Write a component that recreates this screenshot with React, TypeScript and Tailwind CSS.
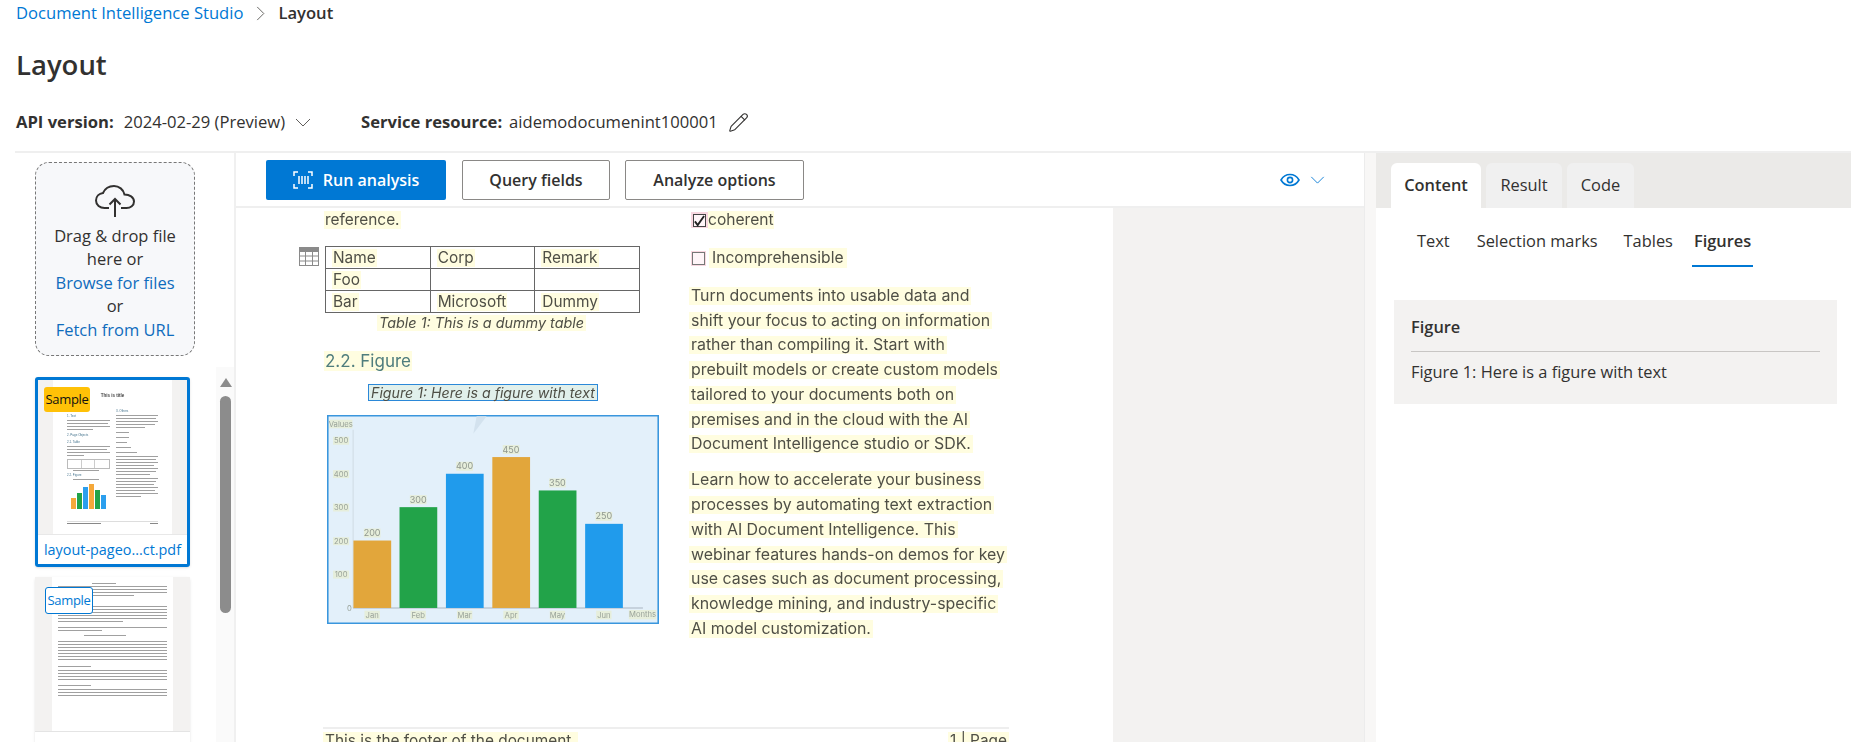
import React from "react";
import { Pencil } from "lucide-react";

const paragraphOne = [
  "Turn documents into usable data and",
  "shift your focus to acting on information",
  "rather than compiling it. Start with",
  "prebuilt models or create custom models",
  "tailored to your documents both on",
  "premises and in the cloud with the AI",
  "Document Intelligence studio or SDK.",
];

const paragraphTwo = [
  "Learn how to accelerate your business",
  "processes by automating text extraction",
  "with AI Document Intelligence. This",
  "webinar features hands-on demos for key",
  "use cases such as document processing,",
  "knowledge mining, and industry-specific",
  "AI model customization.",
];

const chartBars = [
  { label: "Jan", value: "200", x: 131, top: 420, fill: "#e2a63b" },
  { label: "Feb", value: "300", x: 269, top: 320, fill: "#22a349" },
  { label: "Mar", value: "400", x: 408, top: 220, fill: "#209bec" },
  { label: "Apr", value: "450", x: 547, top: 170, fill: "#e2a63b" },
  { label: "May", value: "350", x: 686, top: 270, fill: "#22a349" },
  { label: "Jun", value: "250", x: 825, top: 370, fill: "#209bec" },
];

const Chevron: React.FC<{ className?: string }> = ({ className }) => (
  <svg viewBox="0 0 16 9" fill="none" stroke="currentColor" strokeWidth="1" className={className}>
    <path d="M1 1l7 7 7-7" />
  </svg>
);

const Hl: React.FC<{ children: React.ReactNode; className?: string }> = ({ children, className }) => (
  <span className={`block w-fit bg-[#fffde0] whitespace-nowrap ${className ?? "px-[2px]"}`}>{children}</span>
);

const Bars: React.FC<{ widths: number[]; className?: string }> = ({ widths, className }) => (
  <div className={`flex flex-col gap-[2px] ${className ?? ""}`}>
    {widths.map((w, i) => (
      <div key={i} className="h-px bg-[#a0a0a0]" style={{ width: `${w}%` }} />
    ))}
  </div>
);

const MiniChart = () => (
  <svg viewBox="0 0 42 30" className="h-[30px] w-[42px]">
    <rect x="4" y="18" width="5" height="11" fill="#f5a83a" />
    <rect x="10" y="13" width="5" height="16" fill="#22a349" />
    <rect x="16" y="7" width="5" height="22" fill="#2b9fee" />
    <rect x="22" y="4" width="5" height="25" fill="#f5a83a" />
    <rect x="28" y="10" width="5" height="19" fill="#22a349" />
    <rect x="34" y="15" width="5" height="14" fill="#2b9fee" />
  </svg>
);

const ThumbOne = () => (
  <div className="relative h-[155px] border-b border-[#e8e8e8] bg-[#f3f2f1]">
    <div className="mx-[15px] h-full w-[119px] bg-white px-[14px] pt-[13px] font-['Liberation_Sans',sans-serif] blur-[0.3px]">
      <div className="text-center text-[4.5px] font-bold text-[#444]">This is title</div>
      <div className="mt-[9px] flex gap-[6px]">
        <div className="w-[43px]">
          <div className="mt-[5px] text-[3px] text-[#41718c]">1. Text</div>
          <Bars widths={[100, 96, 100, 60]} className="mt-[2px]" />
          <div className="mt-[3px] text-[3px] text-[#41718c]">2. Page Objects</div>
          <div className="mt-[2px] text-[3px] text-[#41718c]">2.1. Table</div>
          <Bars widths={[100, 92, 100, 40]} className="mt-[2px]" />
          <div className="mt-[3px] grid h-[10px] grid-cols-3 border border-[#bbb]">
            <div className="border-r border-[#ccc]" />
            <div className="border-r border-[#ccc]" />
            <div />
          </div>
          <Bars widths={[70]} className="mt-[1px] ml-[6px]" />
          <div className="mt-[2px] text-[3px] text-[#41718c]">2.2. Figure</div>
          <Bars widths={[70]} className="mt-[1px] ml-[6px]" />
          <MiniChart />
        </div>
        <div className="w-[42px]">
          <div className="text-[3px] text-[#41718c]">3. Others</div>
          <Bars widths={[100, 96, 100, 92, 70]} className="mt-[2px]" />
          <Bars widths={[30]} className="mt-[4px]" />
          <Bars widths={[30]} className="mt-[4px]" />
          <Bars widths={[25]} className="mt-[4px]" />
          <Bars widths={[35]} className="mt-[4px]" />
          <Bars widths={[50]} className="mt-[4px]" />
          <Bars widths={[100, 95, 100, 90, 100, 96, 80]} className="mt-[3px]" />
          <Bars widths={[100, 96, 90, 100, 94, 100, 60]} className="mt-[3px]" />
        </div>
      </div>
      <div className="mt-[11px] flex justify-between border-t border-[#ddd] pt-px">
        <div className="h-px w-[34px] bg-[#888]" />
        <div className="h-px w-[8px] bg-[#888]" />
      </div>
    </div>
    <div className="absolute top-[7px] left-[6px] flex h-[25px] w-[46px] items-center justify-center rounded-[3px] bg-[#ffc107] text-[13px] tracking-[-0.3px] text-[#111]">
      Sample
    </div>
  </div>
);

const ThumbTwo = () => (
  <div className="relative h-[155px] border-b border-[#e4e4e4] bg-[#f3f2f1]">
    <div className="mx-[17px] h-full w-[121px] bg-white px-[6px] pt-[6px] blur-[0.3px]">
      <Bars widths={[40]} className="ml-[34px] w-[60px]" />
      <Bars widths={[100, 100, 100, 70]} className="mt-[2px]" />
      <Bars widths={[30]} className="mt-[3px] ml-[12px] w-[60px]" />
      <Bars widths={[100, 100, 100, 100, 100, 60]} className="mt-[6px]" />
      <Bars widths={[100, 40]} className="mt-[5px]" />
      <Bars widths={[50]} className="mt-[4px] ml-[26px]" />
      <Bars widths={[100, 100, 100, 100, 100, 100, 100]} className="mt-[5px]" />
      <Bars widths={[30]} className="mt-[6px]" />
      <Bars widths={[100, 100, 100, 100]} className="mt-[3px]" />
      <Bars widths={[30]} className="mt-[5px]" />
      <Bars widths={[100, 100, 100]} className="mt-[3px]" />
    </div>
    <div className="absolute top-[10px] left-[10px] flex h-[27px] w-[48px] items-center justify-center rounded-[3px] border border-[#0078d4] bg-white text-[13px] tracking-[-0.3px] text-[#0078d4]">
      Sample
    </div>
  </div>
);

const ChartFigure = () => (
  <svg viewBox="52 44 994 626" className="mt-[14px] block h-[209px] w-[332px]">
    <rect x="54" y="46" width="990" height="622" fill="#e3f0fa" stroke="#3a96dd" strokeWidth="5" />
    <path d="M490 100l40-52h-30z" fill="#d3e2ee" />
    <path d="M130 88v534" stroke="#cfdbe4" strokeWidth="3" />
    <path d="M130 622h868" stroke="#bcc8d3" strokeWidth="5" />
    {[
      { t: "500", y: 121 },
      { t: "400", y: 221 },
      { t: "300", y: 321 },
      { t: "200", y: 422 },
      { t: "100", y: 522 },
    ].map((tick) => (
      <g key={tick.t}>
        <rect x="70" y={tick.y - 12} width="48" height="24" fill="#e6eedb" />
        <text x="94" y={tick.y + 8} textAnchor="middle" fontSize="23" fill="#9aa39a">
          {tick.t}
        </text>
      </g>
    ))}
    <text x="119" y="630" textAnchor="middle" fontSize="23" fill="#9aa39a">0</text>
    <rect x="58" y="58" width="70" height="26" fill="#e6eedb" />
    <text x="93" y="79" textAnchor="middle" fontSize="23" fill="#9aa39a">Values</text>
    {chartBars.map((bar) => (
      <g key={bar.label}>
        <rect x={bar.x} y={bar.top} width="113" height={622 - bar.top} fill={bar.fill} />
        <rect x={bar.x + 31} y={bar.top - 36} width="50" height="27" fill="#e6eedb" />
        <text x={bar.x + 56} y={bar.top - 13} textAnchor="middle" fontSize="27" fill="#8f978f">
          {bar.value}
        </text>
        <rect x={bar.x + 33} y="630" width="46" height="26" fill="#e6eedb" />
        <text x={bar.x + 56} y="651" textAnchor="middle" fontSize="23" fill="#9aa39a">
          {bar.label}
        </text>
      </g>
    ))}
    <rect x="956" y="628" width="82" height="28" fill="#e6eedb" />
    <text x="997" y="650" textAnchor="middle" fontSize="23" fill="#9aa39a">Months</text>
  </svg>
);

const TableIcon = () => (
  <svg viewBox="0 0 20 19" className="absolute top-px left-[-26px] h-[19px] w-[20px]" fill="none" stroke="#8a8a8a">
    <rect x="0.5" y="0.5" width="19" height="18" />
    <path d="M0 4.5h20M0 9h20M0 14h20M6.5 4v15M13.5 4v15" />
    <rect x="0.5" y="0.5" width="19" height="3" fill="#8a8a8a" />
  </svg>
);

const EyeIcon = () => (
  <svg viewBox="0 0 20 14" fill="none" stroke="#0078d4" strokeWidth="1.6" className="ml-[476px] h-[14px] w-[20px]">
    <path d="M1 7c2-3.500 5.300-5.500 9-5.500S17 3.500 19 7c-2 3.500-5.300 5.500-9 5.500S3 10.500 1 7z" />
    <circle cx="10" cy="7" r="2.600" />
  </svg>
);

export default function App() {
  return (
    <div className="flex h-[742px] w-[1851px] flex-col overflow-hidden bg-white font-['Open_Sans',sans-serif] text-[#323130]">
      <header className="h-[151px] shrink-0 pl-4">
        <nav className="flex h-[27px] items-center text-[16.6px] leading-none">
          <span className="text-[#0078d4]">Document Intelligence Studio</span>
          <svg viewBox="0 0 9 16" fill="none" stroke="#605e5c" className="mx-[13px] h-[15px] w-[9px]">
            <path d="M1 1l7 7-7 7" />
          </svg>
          <span className="font-semibold">Layout</span>
        </nav>
        <h1 className="mt-[17px] text-[27.5px] leading-[42px] font-semibold">Layout</h1>
        <div className="mt-[22px] flex h-7 items-center text-[16.6px]">
          <span className="font-bold">API version:</span>
          <span className="ml-[10px]">2024-02-29 (Preview)</span>
          <Chevron className="ml-[10px] h-[9px] w-[16px] text-[#605e5c]" />
          <span className="ml-[50px] font-bold">Service resource:</span>
          <span className="ml-[7px]">aidemodocumenint100001</span>
          <Pencil size={21} strokeWidth={1.25} className="ml-[10px]" />
        </div>
      </header>

      <main className="ml-[15px] flex min-h-0 flex-1 border-t-2 border-[#efefef]">
        <aside className="w-[221px] shrink-0 overflow-hidden border-r-2 border-[#f0f0f0] pl-5">
          <div className="mt-[9px] flex h-[194px] w-[160px] flex-col items-center rounded-[14px] border border-dashed border-[#777] bg-[#f7f8fa] pt-[22px] text-center text-[16.5px] leading-[23.4px]">
            <svg viewBox="0 0 40 32" fill="none" stroke="currentColor" strokeWidth="2" className="h-[32px] w-[40px]">
              <path d="M14 23H9.500C5 23 1 20 1 15.500 1 11.500 4 8.500 8 8c2-4.500 6.500-7 11-7 5 0 9.500 3.500 10.500 8.500 5 0 9.500 2.500 9.500 7 0 4-3.500 6.500-7.500 6.500H26" />
              <path d="M20 32V14M14.500 19.500L20 14l5.500 5.500" />
            </svg>
            <div className="mt-[7px]">Drag &amp; drop file</div>
            <div>here or</div>
            <div className="text-[#0f6cbd]">Browse for files</div>
            <div>or</div>
            <div className="text-[#0f6cbd]">Fetch from URL</div>
          </div>
          <div className="mt-[11px] flex">
            <div className="flex w-[155px] shrink-0 flex-col gap-[10px] pt-[10px]">
              <div className="rounded-[3px] border-[3px] border-[#0078d4] shadow-sm">
                <ThumbOne />
                <div className="flex h-[29px] items-center justify-center text-[14.4px] text-[#0078d4]">
                  layout-pageo...ct.pdf
                </div>
              </div>
              <div className="rounded-[3px] shadow-sm">
                <ThumbTwo />
                <div className="h-[29px] bg-white" />
              </div>
            </div>
            <div className="ml-[26px] flex h-[400px] w-[19px] shrink-0 flex-col items-center bg-[#fafafa] pt-[11px]">
              <div className="h-0 w-0 border-x-[6.5px] border-b-[9px] border-x-transparent border-b-[#8c8c8c]" />
              <div className="mt-[9px] h-[217px] w-[11px] rounded-full bg-[#8c8c8c]" />
            </div>
          </div>
        </aside>

        <section className="flex w-[1128px] shrink-0 flex-col">
          <div className="flex h-[55px] shrink-0 items-center border-b-2 border-[#efefef] pl-[30px] text-[16px] font-semibold">
            <button className="flex h-[40px] w-[180px] items-center justify-center gap-[10px] rounded-[2px] bg-[#0078d4] text-white">
              <svg viewBox="0 0 20 18" fill="none" stroke="currentColor" strokeWidth="1.5" className="h-[18px] w-[20px]">
                <path d="M5 1H1v4M15 1h4v4M5 17H1v-4M15 17h4v-4M6 5v8M9 5v8M12 5v8M15 5v8" />
              </svg>
              Run analysis
            </button>
            <button className="ml-[16px] h-[40px] w-[148px] rounded-[2px] border border-[#8a8886]">Query fields</button>
            <button className="ml-[15px] h-[40px] w-[179px] rounded-[2px] border border-[#8a8886]">Analyze options</button>
            <EyeIcon />
            <Chevron className="ml-[10px] h-[8px] w-[15px] text-[#0078d4]" />
          </div>

          <div className="flex min-h-0 flex-1 bg-[#f3f2f1]">
            <div className="h-full w-[877px] overflow-hidden bg-white pr-[60px] pl-[88px] font-['Inter',sans-serif] text-[15.4px] text-[#4f4f46] blur-[0.35px]">
              <div className="flex h-[519px] gap-[31px]">
                <div className="w-[336px] shrink-0 pt-[3px]">
                  <Hl className="px-px leading-[18px]">reference.</Hl>
                  <div className="relative mt-[17px] ml-px w-[315px]">
                    <TableIcon />
                    <table className="w-full table-fixed border-collapse border border-[#666]">
                      <tbody>
                        {[
                          ["Name", "Corp", "Remark"],
                          ["Foo", "", ""],
                          ["Bar", "Microsoft", "Dummy"],
                        ].map((row) => (
                          <tr key={row[0]} className="h-[22px]">
                            {row.map((cell, i) => (
                              <td key={i} className="border border-[#666] px-[6px] py-0 leading-[18px]">
                                {cell && <Hl className="px-px">{cell}</Hl>}
                              </td>
                            ))}
                          </tr>
                        ))}
                      </tbody>
                    </table>
                  </div>
                  <Hl className="mt-[2px] ml-[53px] px-[2px] text-[14.4px] leading-[16px] italic">Table 1: This is a dummy table</Hl>
                  <Hl className="mt-[20px] px-px text-[17px] leading-[20px] text-[#4f7d7d]">2.2. Figure</Hl>
                  <div className="mt-[13px] ml-[44px] w-fit border-[1.5px] border-[#2b88d8] bg-[#e1f0eb] px-[2px] text-[14.2px] leading-[15px] italic">
                    Figure 1: Here is a figure with text
                  </div>
                  <div className="ml-[3px]">
                    <ChartFigure />
                  </div>
                </div>
                <div className="flex-1 pt-[3px]">
                  <div className="flex items-center">
                    <span className="relative flex h-[16px] w-[17px] items-center justify-center bg-[#f8d7e0]">
                      <span className="flex h-[13px] w-[13px] items-center justify-center border border-[#444] bg-[#fff5f8]">
                        <svg viewBox="0 0 12 12" fill="none" stroke="#222" strokeWidth="2" className="h-[13px] w-[13px]">
                          <path d="M1 7l3 4 7-10" />
                        </svg>
                      </span>
                    </span>
                    <Hl className="px-0 text-[15.6px] leading-[18px]">coherent</Hl>
                  </div>
                  <div className="mt-[19px] flex items-center">
                    <span className="flex h-[15px] w-[15px] items-center justify-center bg-[#f8d7e0]">
                      <span className="h-[13px] w-[13px] border border-[#777] bg-[#fff5f8]" />
                    </span>
                    <Hl className="ml-[3px] px-[3px] text-[15.6px] leading-[20px]">Incomprehensible</Hl>
                  </div>
                  <div className="mt-[19px] -ml-[2px] flex flex-col gap-[7px] text-[15.9px] leading-[17.7px]">
                    {paragraphOne.map((line) => (
                      <Hl key={line}>{line}</Hl>
                    ))}
                  </div>
                  <div className="mt-[18px] -ml-[2px] flex flex-col gap-[7.2px] text-[15.9px] leading-[17.7px]">
                    {paragraphTwo.map((line) => (
                      <Hl key={line}>{line}</Hl>
                    ))}
                  </div>
                </div>
              </div>
              <div className="-ml-px flex w-[686px] justify-between border-t-2 border-[#eeeeee] pt-[3px] leading-[18px]">
                <Hl>This is the footer of the document.</Hl>
                <Hl>1 | Page</Hl>
              </div>
            </div>
          </div>
        </section>

        <div className="w-[12px] shrink-0 border-l border-[#ececec] bg-[#f8f7f6]" />

        <section className="min-w-0 flex-1">
          <div className="flex h-[55px] items-end gap-[5px] bg-[#ebeae8] pl-[15px] text-[16.4px]">
            <div className="flex h-[45px] w-[90px] items-center justify-center rounded-t-[6px] bg-white font-semibold">Content</div>
            <div className="flex h-[45px] w-[76px] items-center justify-center rounded-t-[6px] bg-[#f0f0f0]">Result</div>
            <div className="flex h-[45px] w-[67px] items-center justify-center rounded-t-[6px] bg-[#f0f0f0]">Code</div>
          </div>
          <div className="flex h-[59px] items-start pl-[41px] text-[16.4px]">
            <div className="pt-[21px]">Text</div>
            <div className="ml-[27px] pt-[21px]">Selection marks</div>
            <div className="ml-[26px] pt-[21px]">Tables</div>
            <div className="ml-[19px] h-[59px] border-b-2 border-[#0078d4] px-[2px] pt-[21px] font-semibold">Figures</div>
          </div>
          <div className="mt-[33px] ml-[18px] h-[104px] w-[443px] bg-[#f3f2f1] px-[17px] pt-[15px] text-[16.4px]">
            <div className="border-b border-[#c8c6c4] pb-[13px] leading-[23px] font-semibold">Figure</div>
            <div className="mt-[9px] leading-[22px]">Figure 1: Here is a figure with text</div>
          </div>
        </section>
      </main>
    </div>
  );
}
